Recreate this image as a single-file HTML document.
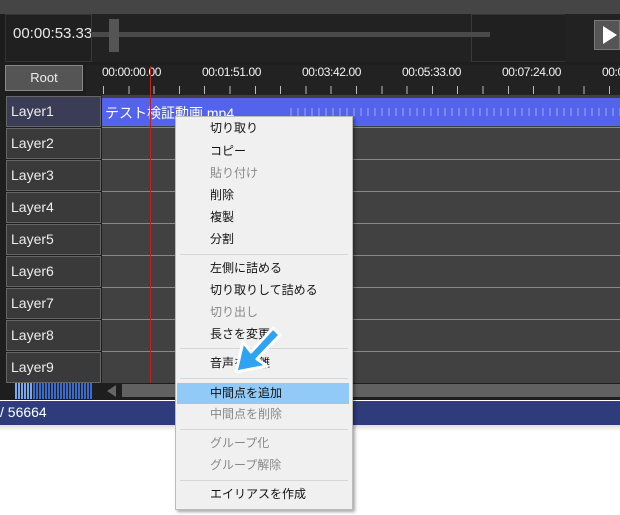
<!DOCTYPE html>
<html><head><meta charset="utf-8"><style>
*{margin:0;padding:0;box-sizing:border-box}
body{width:620px;height:515px;background:#fff;position:relative;overflow:hidden;font-family:"Liberation Sans","Noto Sans CJK JP",sans-serif}
.a{position:absolute}
.lbl{position:absolute;left:6px;width:95px;height:31px;background:#3a3a3a;border:1px solid #666;color:#eee;font-size:14px;line-height:29px;padding-left:4px}
.sep{position:absolute;left:102px;right:0;height:1px;background:#888}
.mi{position:absolute;left:210px;font-size:12px;color:#111;line-height:16px}
.g{color:#888}
.ms{position:absolute;left:180px;width:168px;height:1px;background:#d6d6d6}
</style></head><body>
<div class="a" style="left:0;top:0;width:620px;height:400px;background:#1c1c1c"></div>
<div class="a" style="left:0;top:0;width:620px;height:14px;background:#454545"></div>
<div class="a" style="left:5px;top:14px;width:615px;height:48px;background:#202020;border:1px solid #333"></div>
<div class="a" style="left:13px;top:25px;color:#e8e8e8;font-size:15px">00:00:53.33</div>
<div class="a" style="left:91px;top:14px;width:381px;height:48px;background:#222;border-left:1px solid #3a3a3a;border-right:1px solid #3a3a3a"></div>
<div class="a" style="left:92px;top:32px;width:398px;height:5px;background:#4a4a4a"></div>
<div class="a" style="left:109px;top:19px;width:10px;height:33px;background:#555"></div>
<div class="a" style="left:565px;top:14px;width:55px;height:48px;background:#222"></div>
<div class="a" style="left:594px;top:20px;width:26px;height:30px;background:#555;border:1px solid #777"></div>
<div class="a" style="left:603px;top:26px;width:0;height:0;border-left:14px solid #fff;border-top:9px solid transparent;border-bottom:9px solid transparent"></div>
<div class="a" style="left:0;top:62px;width:620px;height:338px;background:#1e1e1e"></div>
<div class="a" style="left:5px;top:65px;width:78px;height:26px;background:#555;border:1px solid #888;color:#eee;font-size:13px;text-align:center;line-height:24px">Root</div>
<div class="a" style="left:86px;top:65px;width:534px;height:30px;background:#222"></div>
<div class="a" style="left:86px;top:65px;color:#f2f2f2;font-size:12px;white-space:nowrap;letter-spacing:-.4px">
<span class="a" style="left:16px">00:00:00.00</span><span class="a" style="left:116px">00:01:51.00</span><span class="a" style="left:216px">00:03:42.00</span><span class="a" style="left:316px">00:05:33.00</span><span class="a" style="left:416px">00:07:24.00</span><span class="a" style="left:516px">00:09</span></div>
<div class="a" style="left:86px;top:86px;width:534px;height:8px;background:repeating-linear-gradient(90deg,transparent 0 17px,#bbb 17px 18px,transparent 18px 25.3px)"></div>
<div class="a" style="left:102px;top:95px;width:518px;height:288px;background:#414141"></div>
<div class="sep" style="top:127px"></div><div class="sep" style="top:159px"></div><div class="sep" style="top:191px"></div><div class="sep" style="top:223px"></div><div class="sep" style="top:255px"></div><div class="sep" style="top:287px"></div><div class="sep" style="top:319px"></div><div class="sep" style="top:351px"></div>
<div class="a" style="left:102px;top:98px;width:518px;height:28px;background:#5363eb"></div>
<div class="a" style="left:290px;top:108px;width:330px;height:8px;background:repeating-linear-gradient(90deg,#8b95f0 0 2px,transparent 2px 7px);opacity:.7"></div>
<div class="a" style="left:105px;top:103px;color:#fff;font-size:14px;white-space:nowrap">テスト検証動画.mp4</div>
<div class="lbl" style="top:96px;background:#3a3d55">Layer1</div>
<div class="lbl" style="top:128px">Layer2</div><div class="lbl" style="top:160px">Layer3</div><div class="lbl" style="top:192px">Layer4</div><div class="lbl" style="top:224px">Layer5</div><div class="lbl" style="top:256px">Layer6</div><div class="lbl" style="top:288px">Layer7</div><div class="lbl" style="top:320px">Layer8</div><div class="lbl" style="top:352px">Layer9</div>
<div class="a" style="left:150px;top:66px;width:1px;height:317px;background:#c02020"></div>
<div class="a" style="left:15px;top:383px;width:78px;height:16px;background:repeating-linear-gradient(90deg,#3a6acc 0 2px,transparent 2px 3px)"></div>
<div class="a" style="left:15px;top:383px;width:18px;height:16px;background:repeating-linear-gradient(90deg,#7aa8f0 0 2px,transparent 2px 3px)"></div>
<div class="a" style="left:107px;top:385px;width:0;height:0;border-right:9px solid #666;border-top:6px solid transparent;border-bottom:6px solid transparent"></div>
<div class="a" style="left:122px;top:384px;width:498px;height:13px;background:#616161"></div>
<div class="a" style="left:0;top:401px;width:620px;height:24px;background:#2e3c7c;border-top:1px solid #444"></div>
<div class="a" style="left:0;top:404px;color:#fff;font-size:14px">/ 56664</div>
<div class="a" style="left:0;top:425px;width:620px;height:6px;background:linear-gradient(#ddd,#fff)"></div>
<div class="a" style="left:175px;top:116px;width:178px;height:394px;background:#f0f0f0;border:1px solid #bbb;box-shadow:2px 2px 3px rgba(0,0,0,.35)"></div>
<div class="a" style="left:177px;top:383px;width:172px;height:21px;background:#91c9f7"></div>
<div class="mi" style="top:120px">切り取り</div>
<div class="mi" style="top:143px">コピー</div>
<div class="mi g" style="top:165px">貼り付け</div>
<div class="mi" style="top:187px">削除</div>
<div class="mi" style="top:209px">複製</div>
<div class="mi" style="top:231px">分割</div>
<div class="ms" style="top:254px"></div>
<div class="mi" style="top:260px">左側に詰める</div>
<div class="mi" style="top:282px">切り取りして詰める</div>
<div class="mi g" style="top:304px">切り出し</div>
<div class="mi" style="top:326px">長さを変更</div>
<div class="ms" style="top:348px"></div>
<div class="mi" style="top:355px">音声を分離</div>
<div class="ms" style="top:378px"></div>
<div class="mi" style="top:385px">中間点を追加</div>
<div class="mi g" style="top:406px">中間点を削除</div>
<div class="ms" style="top:429px"></div>
<div class="mi g" style="top:435px">グループ化</div>
<div class="mi g" style="top:457px">グループ解除</div>
<div class="ms" style="top:480px"></div>
<div class="mi" style="top:486px">エイリアスを作成</div>
<svg class="a" style="left:225px;top:322px" width="60" height="58" viewBox="0 0 60 58">
<path d="M48 6 L26 30 L18 20 L11 50 L42 44 L32 37 L55 13 Z" fill="#2ea3f2" stroke="#fff" stroke-width="3" stroke-linejoin="round"/>
</svg>
</body></html>
